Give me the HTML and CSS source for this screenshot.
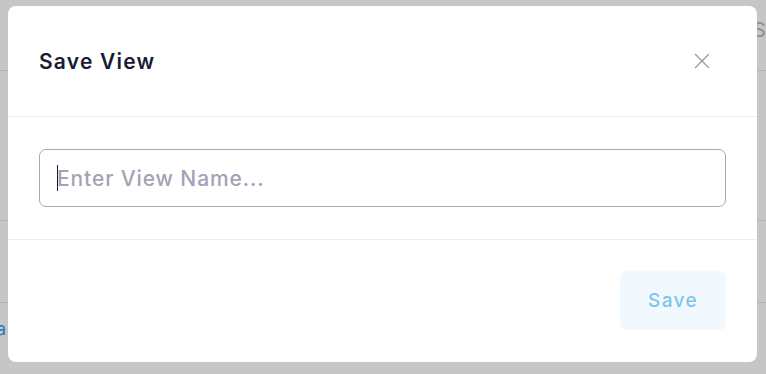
FILE: index.html
```html
<!DOCTYPE html>
<html>
<head>
<meta charset="utf-8">
<link rel="stylesheet" href="styles.css">
</head>
<body>
<div class="backdrop">
  <div class="bg-hint bg-line-top"></div>
  <div class="bg-hint bg-line-mid"></div>
  <div class="bg-hint bg-line-low"></div>
  <div class="bg-text">Se</div>
  <div class="bg-link">a</div>
  <div class="modal">
    <div class="modal-header">
      <h2 class="modal-title">Save View</h2>
      <button class="close-btn" aria-label="Close">
        <svg width="16" height="16" viewBox="0 0 16 16"><path d="M1.5 1.5 L14.5 14.5 M14.5 1.5 L1.5 14.5" stroke="#9b9aac" stroke-width="1.4" fill="none" stroke-linecap="round"/></svg>
      </button>
    </div>
    <div class="modal-body">
      <div class="input-box">
        <span class="caret"></span>
        <span class="placeholder">Enter View Name...</span>
      </div>
    </div>
    <div class="modal-footer">
      <button class="save-btn">Save</button>
    </div>
  </div>
</div>
</body>
</html>
```

FILE: styles.css
```css
html, body {
  margin: 0;
  padding: 0;
  width: 766px;
  height: 374px;
  overflow: hidden;
  font-family: Inter, "Noto Sans", sans-serif;
}
.backdrop {
  position: relative;
  width: 766px;
  height: 374px;
  background: #c6c6c6;
  padding: 6px 0 0 8px;
  box-sizing: border-box;
}
.bg-hint {
  position: absolute;
  height: 1px;
  background: #b4b4b4;
}
.bg-line-top { left: 0; right: 0; top: 70px; }
.bg-line-mid { left: 0; right: 0; top: 220px; }
.bg-line-low { left: 0; right: 0; top: 302px; }
.bg-text {
  position: absolute;
  left: 753px;
  top: 18px;
  font-size: 20px;
  color: #8d8d98;
}
.bg-link {
  position: absolute;
  left: -4px;
  top: 318px;
  font-size: 18px;
  color: #2a7bb8;
}
.modal {
  position: relative;
  width: 749px;
  height: 356px;
  background: #fff;
  border-radius: 8px;
  display: flex;
  flex-direction: column;
}
.modal-header {
  height: 111px;
  box-sizing: border-box;
  border-bottom: 1px solid #eeeef2;
  display: flex;
  align-items: center;
  justify-content: space-between;
  padding: 0 47px 0 31px;
}
.modal-title {
  margin: 0;
  font-size: 21px;
  font-weight: 600;
  color: #181c32;
  letter-spacing: 1.2px;
}
.close-btn {
  border: 0;
  background: none;
  padding: 0;
  width: 16px;
  height: 16px;
  display: flex;
}
.modal-body {
  height: 123px;
  box-sizing: border-box;
  border-bottom: 1px solid #eeeef2;
  padding: 32px 31px 0 31px;
}
.input-box {
  height: 58px;
  box-sizing: border-box;
  border: 1px solid #a9a8ba;
  border-radius: 7px;
  display: flex;
  align-items: center;
  padding-left: 17px;
}
.caret {
  width: 1px;
  height: 26px;
  background: #181c32;
  margin-right: -1px;
}
.placeholder {
  font-size: 21px;
  color: #a3a2b6;
  font-weight: 500;
  letter-spacing: 0.9px;
}
.modal-footer {
  flex: 1;
  display: flex;
  justify-content: flex-end;
  align-items: flex-start;
  padding: 31px 31px 0 0;
}
.save-btn {
  width: 106px;
  height: 59px;
  border: 0;
  border-radius: 7px;
  background: #f1f9fe;
  color: #7ec5ec;
  font-family: Inter, "Noto Sans", sans-serif;
  font-size: 19px;
  font-weight: 500;
  letter-spacing: 1.4px;
}
```
